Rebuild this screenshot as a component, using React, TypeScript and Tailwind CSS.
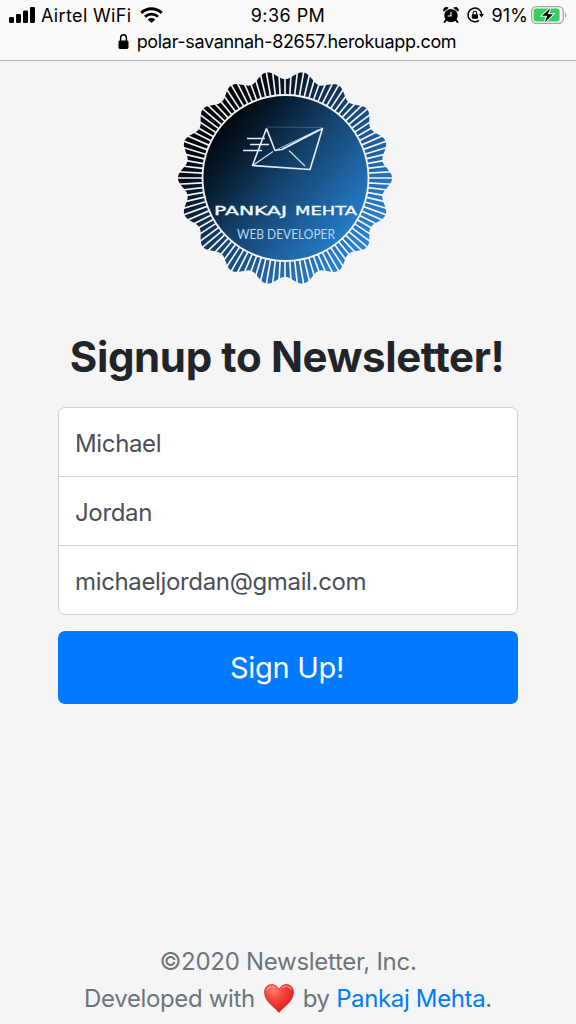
import React from "react";

const CX = 107;
const CY = 106;
const LOBES = 18;
const TEETH = 108;

function point(radius: number, degrees: number) {
  const a = (degrees * Math.PI) / 180;
  return `${(CX + radius * Math.cos(a)).toFixed(2)} ${(CY + radius * Math.sin(a)).toFixed(2)}`;
}

const rim = Array.from({ length: TEETH * 2 }, (_, i) => {
  const deg = (i * 360) / (TEETH * 2);
  const radius = 103 + 4.2 * Math.cos((deg * LOBES * Math.PI) / 180);
  return `${i === 0 ? "M" : "L"}${point(radius, deg)}`;
}).join("") + "Z";

const gaps = Array.from({ length: TEETH }, (_, i) => {
  const deg = (i * 360) / TEETH;
  return `M${point(83, deg)}L${point(109, deg)}`;
}).join("");

function Badge() {
  return (
    <svg className="block h-[213px] w-[214px]" viewBox="0 0 214 213" role="img" aria-label="Pankaj Mehta, Web Developer">
      <defs>
        <linearGradient id="rimFill" gradientUnits="userSpaceOnUse" x1="28" y1="36" x2="190" y2="182">
          <stop offset="0.1" stopColor="#03070d" />
          <stop offset="0.5" stopColor="#174775" />
          <stop offset="1" stopColor="#2b8add" />
        </linearGradient>
        <linearGradient id="discFill" gradientUnits="userSpaceOnUse" x1="42" y1="52" x2="172" y2="160">
          <stop offset="0" stopColor="#020509" />
          <stop offset="0.18" stopColor="#06192b" />
          <stop offset="0.5" stopColor="#144470" />
          <stop offset="1" stopColor="#267cc9" />
        </linearGradient>
      </defs>
      <path d={rim} fill="url(#rimFill)" />
      <path d={gaps} stroke="#f5f5f5" strokeWidth="1.65" />
      <circle cx={CX + 0.5} cy={CY} r="83" fill="url(#discFill)" stroke="#f5f5f5" strokeWidth="1.8" />
      <g fill="none" stroke="#e3edf5" strokeWidth="1.6" strokeLinejoin="round">
        <path d="M88.5 56.5L74.5 93.5L132 97.5L144.5 56.5L104 77.5L97 78.5L88.5 56.5" />
        <path d="M88.5 55L144.5 55.5" strokeWidth="0.6" opacity="0.4" />
        <path d="M98 78L140 58L104 77" strokeWidth="1" opacity="0.75" />
        <path d="M75.5 93L95 79.5M111 78.5L127 94" strokeWidth="1.3" opacity="0.85" />
        <path d="M69 66.5H87M72 72.5H91M65 78.5H84" strokeWidth="1.5" />
      </g>
      <g fill="#f2f7fb" stroke="#f2f7fb" strokeWidth="0.35" className="font-['DejaVu_Sans',sans-serif] text-[12px]">
        <text x="36" y="143.3" textLength="73" lengthAdjust="spacingAndGlyphs">PANKAJ</text>
        <text x="117" y="143.3" textLength="62" lengthAdjust="spacingAndGlyphs">MEHTA</text>
      </g>
      <text x="59" y="167" textLength="98" lengthAdjust="spacingAndGlyphs" fill="#bcd8ef" className="font-['Lato',sans-serif] text-[13.5px]">
        WEB DEVELOPER
      </text>
    </svg>
  );
}

function SignalIcon() {
  return (
    <svg className="h-4 w-[26px]" viewBox="0 0 26 16">
      <rect x="0" y="10" width="5" height="6" rx="1.3" />
      <rect x="7" y="7" width="5" height="9" rx="1.3" />
      <rect x="14" y="3.5" width="5" height="12.5" rx="1.3" />
      <rect x="21" y="0" width="5" height="16" rx="1.3" />
    </svg>
  );
}

function WifiIcon() {
  return (
    <svg className="h-4 w-[23px]" viewBox="0 0 23 16">
      <path d="M1.3 5.9A14.7 14.7 0 0 1 21.7 5.9" fill="none" stroke="#000" strokeWidth="3" />
      <path d="M5 9.7A9.4 9.4 0 0 1 18 9.7" fill="none" stroke="#000" strokeWidth="2.8" />
      <path d="M7.7 12.4A5.6 5.6 0 0 1 15.3 12.4L11.5 16Z" />
    </svg>
  );
}

function AlarmIcon() {
  return (
    <svg className="h-4 w-4" viewBox="0 0 16 16">
      <path d="M3.2 12.8L1.5 15M12.8 12.8L14.5 15" stroke="#000" strokeWidth="2" strokeLinecap="round" />
      <circle cx="8" cy="8.6" r="6.7" />
      <path d="M0.9 4.3A2.8 2.8 0 0 1 5.2 0.9ZM15.1 4.3A2.8 2.8 0 0 0 10.8 0.9Z" stroke="#000" strokeWidth="0.8" />
      <path d="M8 4.7V9H4.6" fill="none" stroke="#fafafa" strokeWidth="1.2" />
    </svg>
  );
}

function RotationLockIcon() {
  return (
    <svg className="h-4 w-[17px]" viewBox="0 0 17 16">
      <path d="M12 13.3A6.8 6.8 0 1 1 14.6 7" fill="none" stroke="#000" strokeWidth="1.5" />
      <path d="M11.9 6.9H17L14.5 10.6Z" />
      <rect x="4.8" y="7.2" width="6.2" height="4.6" rx="0.7" />
      <path d="M6.1 7.5V6A1.8 1.8 0 0 1 9.7 6V7.5" fill="none" stroke="#000" strokeWidth="1.1" />
    </svg>
  );
}

function BatteryIcon() {
  return (
    <svg className="h-[18px] w-[36px]" viewBox="0 0 36 18">
      <rect x="0.7" y="0.7" width="31.6" height="16.6" rx="4.5" fill="none" stroke="#a3a3a3" strokeWidth="1.3" />
      <path d="M34 6.2C35.8 7.2 35.8 10.8 34 11.8Z" fill="#a3a3a3" />
      <rect x="2.6" y="2.6" width="26" height="12.8" rx="2.6" fill="#37cd5f" />
      <path d="M19.2 2.2L11 9.7H16.2L13.8 16.2L22 8.3H16.8Z" stroke="#fafafa" strokeWidth="2" />
      <path d="M19.2 2.2L11 9.7H16.2L13.8 16.2L22 8.3H16.8Z" />
    </svg>
  );
}

function LockIcon() {
  return (
    <svg className="h-[15px] w-[11px]" viewBox="0 0 11 15">
      <rect x="0.5" y="6.5" width="10" height="8.5" rx="1.4" />
      <path d="M2.6 7.5V4A2.9 3.2 0 0 1 8.4 4V7.5" fill="none" stroke="#000" strokeWidth="1.4" />
    </svg>
  );
}

function Heart() {
  return (
    <svg className="mx-[9px] h-[29px] w-[30px]" viewBox="0 0 30 29">
      <defs>
        <radialGradient id="heartFill" cx="0.32" cy="0.2" r="0.85">
          <stop offset="0" stopColor="#ff8173" />
          <stop offset="0.4" stopColor="#f6443b" />
          <stop offset="1" stopColor="#d31d1b" />
        </radialGradient>
      </defs>
      <path
        d="M15 28.6C11.8 23.6 0.5 18.2 0.5 8.3C0.5 3.7 3.6 0.5 7.7 0.5C11.1 0.5 13.9 2.6 15 5.7C16.1 2.6 18.9 0.5 22.3 0.5C26.4 0.5 29.5 3.7 29.5 8.3C29.5 18.2 18.2 23.6 15 28.6Z"
        fill="url(#heartFill)"
        stroke="#c8291f"
        strokeWidth="0.7"
      />
      <path d="M2.8 6.2C3.8 3 7.4 1.6 10.6 3.2M18.8 3.4C21.3 1.3 25.5 2 27 5.2" fill="none" stroke="#ffb5aa" strokeWidth="1.1" strokeLinecap="round" opacity="0.8" />
    </svg>
  );
}

function StatusBar() {
  return (
    <header className="h-[61px] border-b border-[#b5b5b5] bg-[#fafafa] text-black">
      <div className="grid h-[30px] grid-cols-[1fr_auto_1fr] items-center pr-[9px] pl-[9px]">
        <div className="flex items-center">
          <SignalIcon />
          <span className="ml-[6px] text-[18px] tracking-[0.35px]">Airtel WiFi</span>
          <span className="ml-2"><WifiIcon /></span>
        </div>
        <span className="text-[18px] tracking-[0.45px]">9:36 PM</span>
        <div className="flex items-center justify-end">
          <AlarmIcon />
          <span className="ml-2"><RotationLockIcon /></span>
          <span className="ml-2 text-[18px] tracking-[0.1px]">91%</span>
          <span className="ml-[3px]"><BatteryIcon /></span>
        </div>
      </div>
      <div className="flex h-[23px] items-center justify-center gap-2 pr-[2px]">
        <LockIcon />
        <span className="text-[18px] tracking-[-0.33px]">polar-savannah-82657.herokuapp.com</span>
      </div>
    </header>
  );
}

const fields = [
  { label: "First name", value: "Michael" },
  { label: "Last name", value: "Jordan" },
  { label: "Email", value: "michaeljordan@gmail.com" },
];

export default function App() {
  return (
    <div className="flex h-[1024px] w-[576px] flex-col bg-[#f5f5f5] font-['Inter',sans-serif]">
      <StatusBar />
      <main className="flex flex-col items-center px-[58px] pt-[11px]">
        <div className="mr-1.5">
          <Badge />
        </div>
        <h1 className="mt-[46px] mr-0.5 text-[42px] leading-[52px] font-bold tracking-[-0.36px] whitespace-nowrap text-[#212529]">
          Signup to Newsletter!
        </h1>
        <form className="mt-[24px] flex w-[460px] flex-col" onSubmit={(e) => e.preventDefault()}>
          <div className="flex flex-col divide-y divide-[#ced0d2] overflow-hidden rounded-[7px] border border-[#ced0d2] bg-white">
            {fields.map((field) => (
              <input
                key={field.label}
                aria-label={field.label}
                defaultValue={field.value}
                className="h-[69px] w-full px-4 pt-0.5 text-[24px] tracking-[-0.35px] text-[#495057] outline-none last:h-[68px]"
              />
            ))}
          </div>
          <button className="mt-4 h-[73px] rounded-[7px] bg-[#007bff] pt-px pr-0.5 text-[29px] tracking-[-0.3px] text-white">Sign Up!</button>
        </form>
      </main>
      <footer className="mt-auto flex flex-col items-center pb-[7px] text-[24px] leading-[37px] tracking-[-0.28px] text-[#6c757d]">
        <p>©2020 Newsletter, Inc.</p>
        <p className="flex items-center tracking-[-0.36px] whitespace-pre">
          Developed with<Heart />by <a href="#" className="text-[#007bff]">Pankaj Mehta</a>.
        </p>
      </footer>
    </div>
  );
}
